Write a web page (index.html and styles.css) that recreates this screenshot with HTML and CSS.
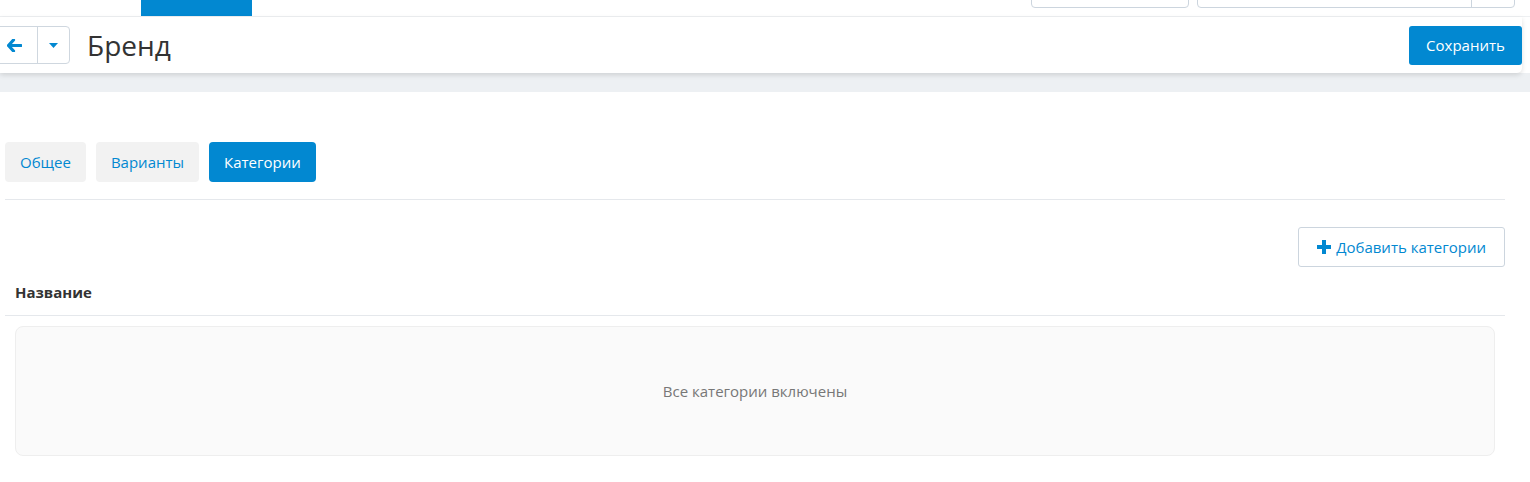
FILE: index.html
```html
<!DOCTYPE html>
<html lang="ru">
<head>
<meta charset="utf-8">
<title>Бренд</title>
<link rel="stylesheet" href="styles.css">
</head>
<body>
<div class="topbar">
  <div class="topnav-active"></div>
  <div class="topbar-right">
    <div class="top-box top-box-a"></div>
    <div class="top-box top-box-b"><div class="top-box-add"></div></div>
  </div>
</div>
<div class="header">
  <div class="nav-group">
    <button class="nav-btn nav-back" type="button">
      <svg width="15" height="13" viewBox="0 0 15 13"><path d="M6.5 1 L1.5 6.5 L6.5 12 M2 6.5 H14" fill="none" stroke="#0288d1" stroke-width="3.2" stroke-linejoin="round" stroke-linecap="round"/></svg>
    </button>
    <button class="nav-btn nav-caret" type="button">
      <svg width="9" height="5" viewBox="0 0 9 5"><path d="M0 0 H9 L4.5 5 Z" fill="#0288d1"/></svg>
    </button>
  </div>
  <h1 class="title">Бренд</h1>
  <button class="btn-save" type="button">Сохранить</button>
</div>
<div class="band"></div>
<div class="content">
  <div class="tabs">
    <span class="tab">Общее</span>
    <span class="tab">Варианты</span>
    <span class="tab tab-active">Категории</span>
  </div>
  <div class="toolbar">
    <button class="btn-add" type="button">
      <svg width="14" height="14" viewBox="0 0 14 14"><path d="M5 0 H9 V5 H14 V9 H9 V14 H5 V9 H0 V5 H5 Z" fill="#0288d1"/></svg>
      Добавить категории
    </button>
  </div>
  <div class="table-head">Название</div>
  <div class="empty">Все категории включены</div>
</div>
</body>
</html>
```
FILE: styles.css
```css
* { box-sizing: border-box; }
html, body {
  margin: 0;
  padding: 0;
  background: #fff;
  font-family: "Open Sans", "Noto Sans", sans-serif;
  overflow: hidden;
}
.topbar {
  height: 17px;
  display: flex;
  align-items: flex-start;
  border-bottom: 1px solid #eef0f2;
}
.topnav-active {
  margin-left: 141px;
  width: 111px;
  height: 16px;
  background: #0288d1;
}
.topbar-right {
  margin-left: auto;
  display: flex;
  gap: 8px;
  margin-right: 15px;
}
.top-box {
  height: 32px;
  margin-top: -24px;
  border: 1px solid #ccd5de;
  border-radius: 4px;
  background: #fff;
}
.top-box-a { width: 158px; }
.top-box-b { width: 318px; display: flex; justify-content: flex-end; }
.top-box-add { width: 43px; border-left: 1px solid #ccd5de; }
.header {
  height: 56px;
  margin-right: 8px;
  display: flex;
  align-items: center;
  background: #fff;
  border-bottom-right-radius: 5px;
  box-shadow: 0 2px 5px rgba(0, 0, 0, 0.13);
  position: relative;
  z-index: 1;
}
.nav-group {
  display: flex;
  height: 38px;
  margin-left: -10px;
  border: 1px solid #cfd7df;
  border-radius: 4px;
  background: #fff;
}
.nav-btn {
  border: 0;
  background: transparent;
  padding: 0;
  display: flex;
  align-items: center;
  justify-content: center;
}
.nav-back { width: 47px; border-right: 1px solid #cfd7df; }
.nav-caret { width: 31px; }
.title {
  margin: 0 0 0 17px;
  font-size: 28px;
  font-weight: 400;
  color: #333;
  line-height: 1;
}
.btn-save {
  margin-left: auto;
  height: 39px;
  width: 113px;
  border: 0;
  border-radius: 3px;
  background: #0288d1;
  color: #fff;
  font-family: inherit;
  font-size: 15px;
  padding: 0;
}
.band {
  height: 19px;
  background: #edf0f3;
}
.content {
  padding: 0 25px 0 5px;
}
.tabs {
  display: flex;
  gap: 10px;
  margin-top: 50px;
  padding-bottom: 17px;
  border-bottom: 1px solid #e5e8ec;
}
.tab {
  height: 40px;
  padding: 0 15px;
  display: flex;
  align-items: center;
  border-radius: 4px;
  background: #f2f2f2;
  color: #0288d1;
  font-size: 15px;
}
.tab-active {
  background: #0288d1;
  color: #fff;
}
.toolbar {
  display: flex;
  justify-content: flex-end;
  padding-top: 27px;
}
.btn-add {
  height: 40px;
  padding: 0 18px;
  display: flex;
  align-items: center;
  gap: 5px;
  border: 1px solid #ccd5de;
  border-radius: 3px;
  background: #fff;
  color: #0288d1;
  font-family: inherit;
  font-size: 15px;
}
.table-head {
  padding: 15px 10px 12px 10px;
  font-size: 15px;
  font-weight: 700;
  color: #333;
  border-bottom: 1px solid #e5e8ec;
  line-height: 21px;
}
.empty {
  margin: 10px 10px 0;
  height: 130px;
  display: flex;
  align-items: center;
  justify-content: center;
  background: #fafafa;
  border: 1px solid #eeeeee;
  border-radius: 8px;
  color: #777;
  font-size: 15px;
}
```
